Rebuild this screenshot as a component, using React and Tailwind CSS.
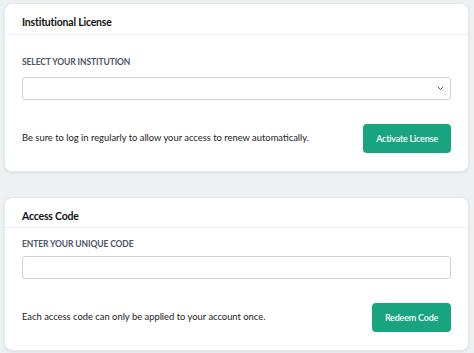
import React from "react";

function Card({ title, children, headerH }) {
  return (
    <div className="bg-white rounded-lg shadow-[0_1px_3px_rgba(0,0,0,0.08)] border border-[#e6e9ec]">
      <div className={`${headerH} flex items-center pt-[8px] px-[17px] border-b border-[#eef0f2]`}>
        <span className="text-[10.5px] tracking-[-0.2px] font-bold text-[#111]">{title}</span>
      </div>
      {children}
    </div>
  );
}

export default function App() {
  return (
    <div
      className="w-[474px] h-[353px] bg-[#eef1f4] pt-[3px] px-[4px] pr-[5px] flex flex-col gap-[25px]"
      style={{ fontFamily: "Lato, 'Open Sans', sans-serif" }}
    >
      <Card title="Institutional License" headerH="h-[31px]">
        <div className="px-[17px] pt-[21px] pb-[18px]">
          <div className="text-[8.5px] font-bold tracking-[-0.1px] text-[#4a5568] leading-[12px]">SELECT YOUR INSTITUTION</div>
          <div className="mt-[9px] h-[23px] border border-[#cfd3d7] rounded-[3px] flex items-center justify-end pr-[6px]">
            <svg width="7" height="5" viewBox="0 0 7 5" fill="none">
              <path d="M1 1l2.5 2.5L6 1" stroke="#555" strokeWidth="1" />
            </svg>
          </div>
          <div className="mt-[24px] flex items-center justify-between">
            <span className="whitespace-nowrap text-[9.4px] text-[#222]">Be sure to log in regularly to allow your access to renew automatically.</span>
            <button className="w-[88px] h-[29px] rounded-[4px] bg-[#18a47e] text-white text-[9px] tracking-[-0.2px] font-semibold">Activate License</button>
          </div>
        </div>
      </Card>
      <Card title="Access Code" headerH="h-[30px]">
        <div className="px-[17px] pt-[10px] pb-[18px]">
          <div className="text-[8.5px] font-bold tracking-[-0.1px] text-[#4a5568] leading-[12px]">ENTER YOUR UNIQUE CODE</div>
          <div className="mt-[6px] h-[23px] border border-[#cfd3d7] rounded-[3px]" />
          <div className="mt-[24px] flex items-center justify-between">
            <span className="whitespace-nowrap text-[9.4px] text-[#222]">Each access code can only be applied to your account once.</span>
            <button className="w-[79px] h-[29px] rounded-[4px] bg-[#18a47e] text-white text-[9px] tracking-[-0.2px] font-semibold">Redeem Code</button>
          </div>
        </div>
      </Card>
    </div>
  );
}
